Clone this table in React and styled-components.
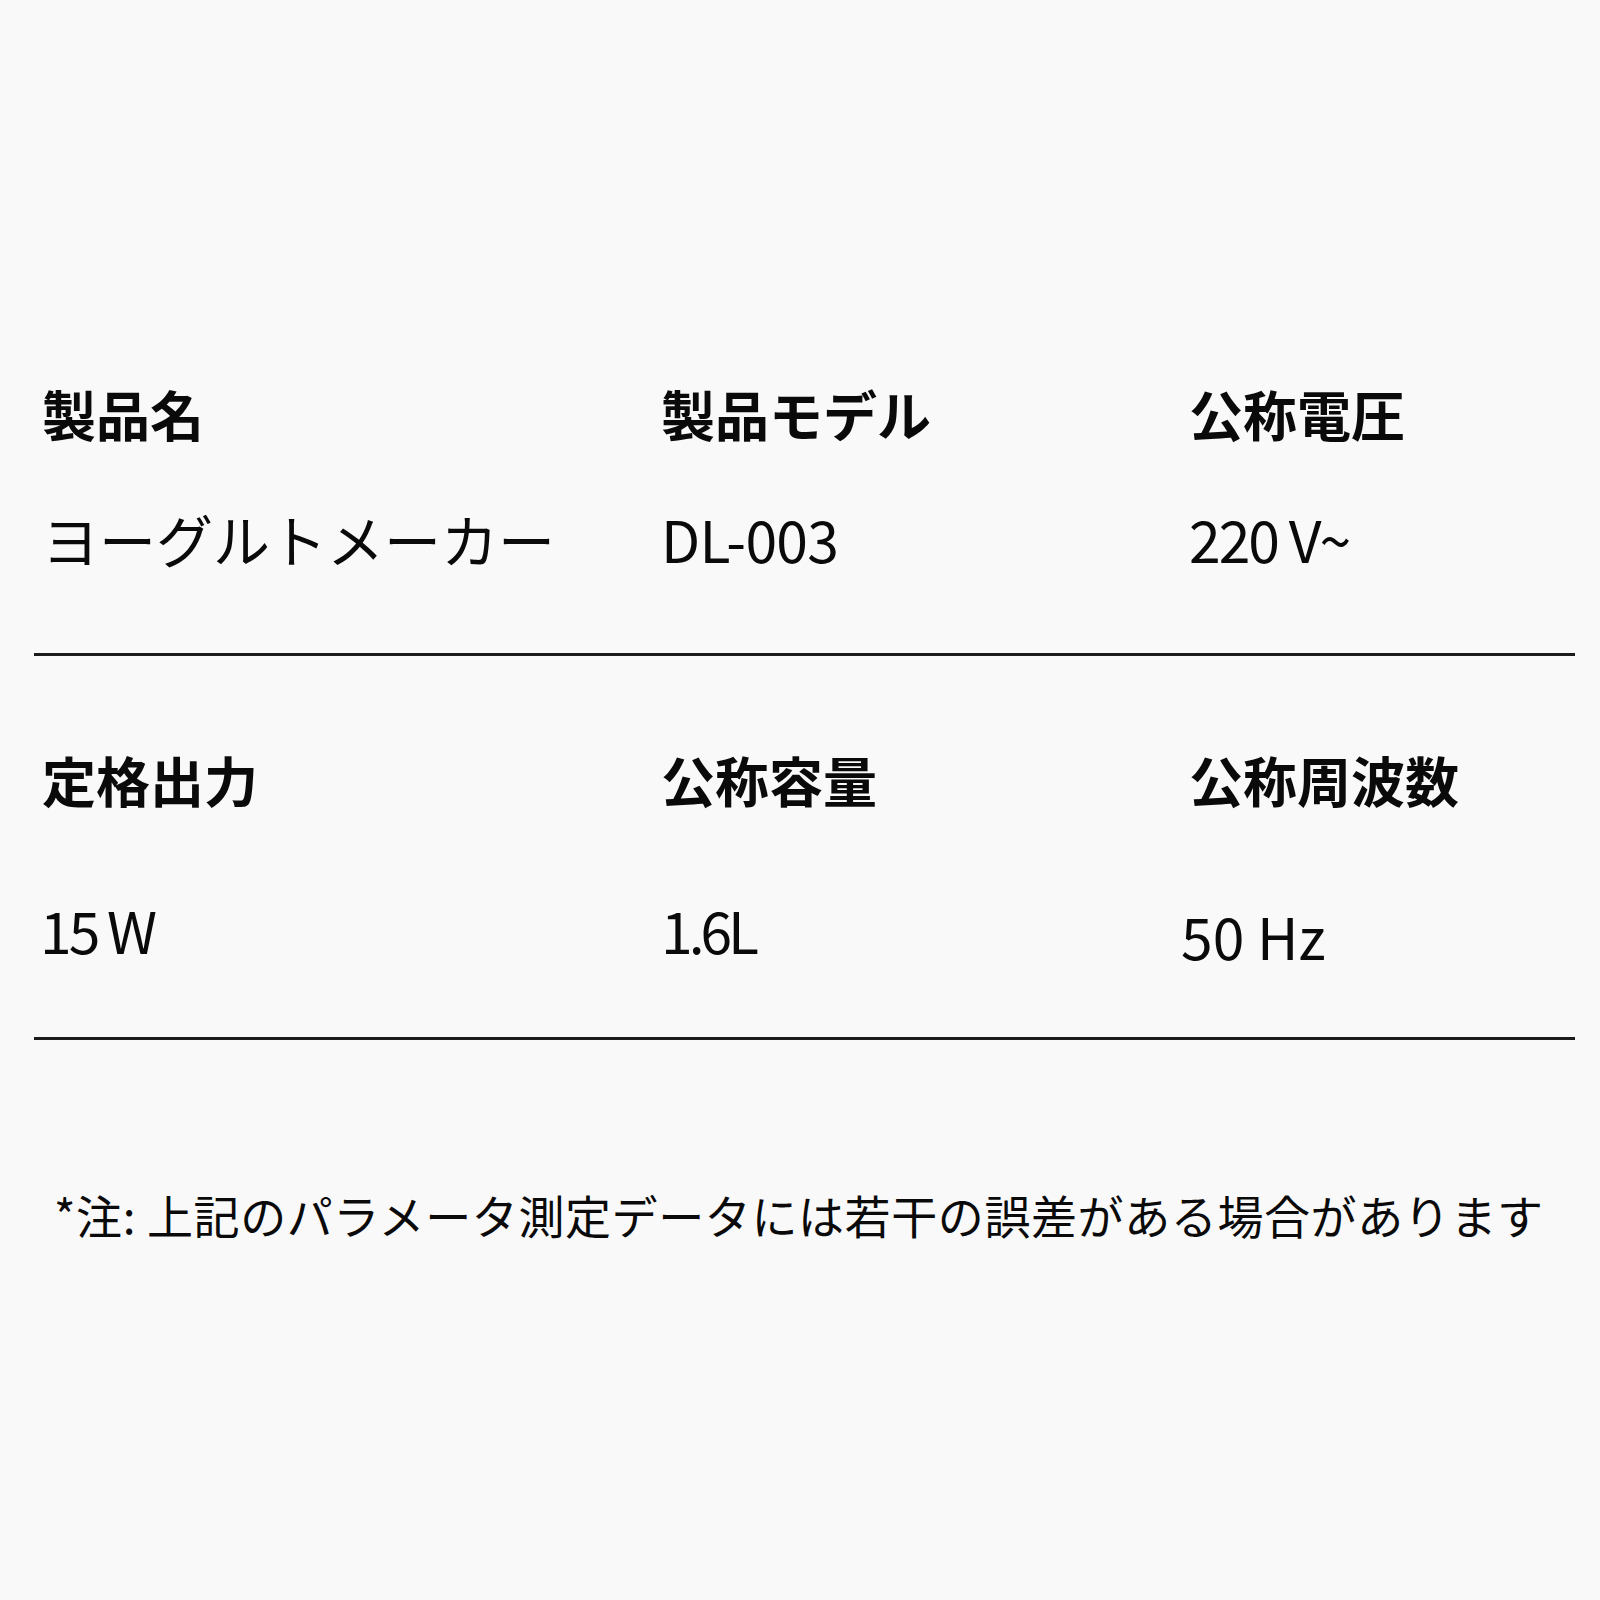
import React from 'react'
import styled, { createGlobalStyle } from 'styled-components'

const GlobalStyle = createGlobalStyle`
  html, body {
    margin: 0;
    padding: 0;
    background: #f9f9f9;
  }
  body {
    font-family: "Noto Sans CJK JP", "Noto Sans", sans-serif;
    color: #0a0a0a;
  }
`

const specs = [
    {
        top: 387, gap: 69, bottom: 86,
        cells: [
            { label: '製品名', value: 'ヨーグルトメーカー' },
            { label: '製品モデル', value: 'DL-003', tight: -0.7 },
            { label: '公称電圧', value: '220 V~', tight: -2 },
        ],
    },
    {
        top: 97, gap: 94, bottom: 73,
        cells: [
            { label: '定格出力', value: '15 W', shiftX: -2, tight: -3 },
            { label: '公称容量', value: '1.6L', tight: -4 },
            { label: '公称周波数', value: '50 Hz', shiftX: -8, shiftY: 6 },
        ],
    },
]

function App() {
    return (
        <Page>
            <GlobalStyle />
            <SpecTable>
                {specs.map((row, i) => (
                    <SpecRow key={i} $top={row.top} $gap={row.gap} $bottom={row.bottom}>
                        {row.cells.map((c) => (
                            <Label key={c.label}>{c.label}</Label>
                        ))}
                        {row.cells.map((c) => (
                            <Value
                                key={c.value}
                                $dx={c.shiftX || 0}
                                $dy={c.shiftY || 0}
                                $tight={c.tight || 0}
                            >
                                {c.value}
                            </Value>
                        ))}
                    </SpecRow>
                ))}
            </SpecTable>
            <Note>*注: 上記のパラメータ測定データには若干の誤差がある場合があります</Note>
        </Page>
    )
}

export default App

const Page = styled.div`
    width: 1600px;
    height: 1600px;
    background: #f9f9f9;
    overflow: hidden;
`

const SpecTable = styled.section`
    margin-left: 34px;
    width: 1541px;
`

const SpecRow = styled.div`
    display: grid;
    grid-template-columns: 619px 528px 1fr;
    row-gap: ${(p) => p.$gap}px;
    padding: ${(p) => p.$top}px 0 ${(p) => p.$bottom}px 8px;
    border-bottom: 3px solid #1c1c1c;
`

const Label = styled.div`
    font-size: 54px;
    line-height: 54px;
    font-weight: 700;
    white-space: nowrap;
`

const Value = styled.div`
    font-size: 57px;
    line-height: 57px;
    font-weight: 400;
    white-space: nowrap;
    letter-spacing: ${(p) => p.$tight}px;
    margin-left: ${(p) => p.$dx}px;
    margin-top: ${(p) => p.$dy}px;
`

const Note = styled.p`
    margin: 151px 0 0 54px;
    font-size: 46px;
    line-height: 46px;
    letter-spacing: 0.6px;
    white-space: nowrap;
`
